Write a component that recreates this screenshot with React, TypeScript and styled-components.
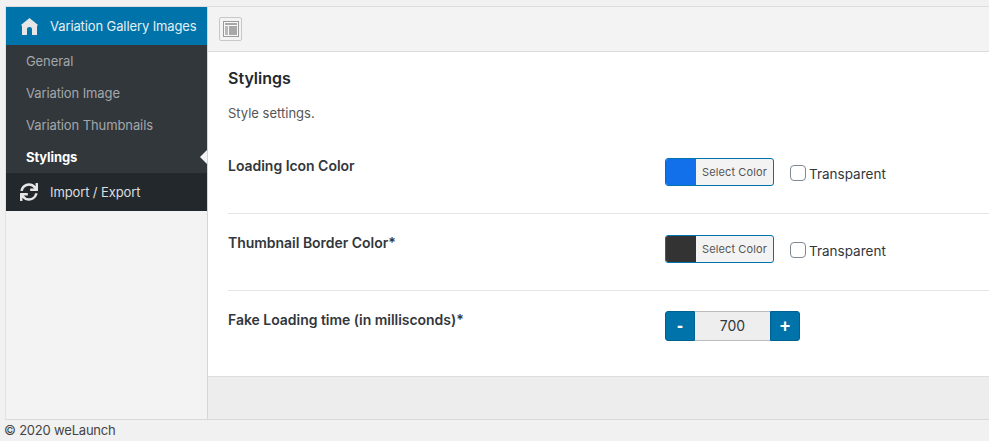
import React from 'react'
import styled, { createGlobalStyle } from 'styled-components'
import { FaSync } from 'react-icons/fa'

const GlobalStyle = createGlobalStyle`
  html, body {
    margin: 0;
    padding: 0;
    background: #f1f1f1;
  }
  body {
    font-family: Inter, "Liberation Sans", sans-serif;
    font-size: 13px;
    color: #444;
  }
`

const Page = styled.div`
  width: 989px;
  height: 441px;
  overflow: hidden;
  display: flex;
  flex-direction: column;
  padding-top: 6px;
  box-sizing: border-box;
`

const Frame = styled.div`
  height: 414px;
  box-sizing: border-box;
  margin-left: 5px;
  display: flex;
  border-top: 1px solid #dcdcdc;
  border-left: 1px solid #e2e2e2;
  border-bottom: 1px solid #d8d8d8;
`

const Sidebar = styled.nav`
  width: 201px;
  flex-shrink: 0;
  background: #f3f3f3;
  border-right: 1px solid #d5d5d5;
`

const MenuHead = styled.div<{ $active?: boolean }>`
  height: 38px;
  display: flex;
  align-items: center;
  gap: 12px;
  padding-left: 14px;
  background: ${p => (p.$active ? '#0073aa' : '#23282d')};
  color: ${p => (p.$active ? '#e4eff5' : '#dcdedf')};
  font-size: 13px;
  letter-spacing: -0.11px;
`

const IconSlot = styled.span`
  width: 18px;
  height: 18px;
  display: flex;
  align-items: center;
  justify-content: center;
  color: #e6e6e6;
`

const SubMenu = styled.ul`
  list-style: none;
  margin: 0;
  padding: 0;
  background: #32373c;
`

const SubItem = styled.li<{ $current?: boolean }>`
  position: relative;
  height: 32px;
  line-height: 32px;
  padding-left: 20px;
  font-size: 13px;
  letter-spacing: -0.1px;
  color: ${p => (p.$current ? '#fff' : '#a3a7ab')};
  font-weight: ${p => (p.$current ? 700 : 400)};

  ${p =>
    p.$current &&
    `
    &::after {
      content: '';
      position: absolute;
      right: 0;
      top: 9px;
      border: 7px solid transparent;
      border-left-width: 0;
      border-right-color: #f3f3f3;
      border-right-width: 7px;
    }
  `}
`

const Main = styled.main`
  flex: 1;
  display: flex;
  flex-direction: column;
  min-width: 0;
  background: #ededed;
`

const Toolbar = styled.div`
  height: 44px;
  display: flex;
  align-items: center;
  padding-left: 11px;
  background: #f3f3f3;
  border-bottom: 1px solid #dcdcdc;
`

const ToolButton = styled.button`
  width: 23px;
  height: 24px;
  padding: 0;
  display: flex;
  align-items: center;
  justify-content: center;
  background: #f3f3f3;
  border: 1px solid #c8c8c8;
  border-radius: 2px;
`

const Content = styled.section`
  height: 325px;
  box-sizing: border-box;
  background: #fff;
  padding: 16px 0 0 20px;
  border-bottom: 1px solid #dedede;
`

const Title = styled.h2`
  margin: 0;
  font-size: 16px;
  line-height: 20px;
  font-weight: 600;
  color: #23282d;
`

const Description = styled.p`
  margin: 16px 0 0;
  font-size: 13px;
  line-height: 18px;
  color: #555;
`

const Row = styled.div<{ $first?: boolean }>`
  display: grid;
  grid-template-columns: 437px 1fr;
  height: ${p => (p.$first ? '78px' : '77px')};
  box-sizing: border-box;
  padding-top: ${p => (p.$first ? '22px' : '20px')};
  border-top: ${p => (p.$first ? 'none' : '1px solid #e5e5e5')};
  margin-top: ${p => (p.$first ? '13px' : '0')};
`

const Label = styled.div`
  font-size: 14px;
  font-weight: 600;
  line-height: 18px;
  color: #32373c;
  letter-spacing: -0.03px;
`

const Controls = styled.div`
  display: flex;
  align-items: flex-start;
`

const ColorButton = styled.button`
  width: 109px;
  height: 28px;
  margin-top: 1px;
  padding: 0;
  display: flex;
  box-sizing: border-box;
  overflow: hidden;
  background: #f3f3f3;
  border: 1px solid #0073aa;
  border-radius: 3px;
  font-family: inherit;
`

const Swatch = styled.span<{ $color: string }>`
  width: 30px;
  height: 100%;
  background: ${p => p.$color};
`

const ColorText = styled.span`
  flex: 1;
  font-size: 11px;
  line-height: 26px;
  text-align: center;
  color: #555;
  letter-spacing: 0.12px;
`

const CheckLabel = styled.label`
  display: flex;
  align-items: flex-start;
  gap: 3px;
  margin: 8px 0 0 16px;
  font-size: 13.5px;
  line-height: 16px;
  color: #32373c;
`

const CheckBox = styled.span`
  width: 16px;
  height: 16px;
  box-sizing: border-box;
  background: #fff;
  border: 1px solid #7e8993;
  border-radius: 4px;
`

const CheckText = styled.span`
  margin-top: 1px;
`

const Spinner = styled.div`
  display: flex;
  height: 30px;
`

const SpinButton = styled.button<{ $side: 'left' | 'right' }>`
  width: 30px;
  height: 30px;
  padding: 0;
  background: #0073aa;
  border: 1px solid #006291;
  border-radius: ${p => (p.$side === 'left' ? '3px 0 0 3px' : '0 3px 3px 0')};
  color: #fff;
  font-family: "Liberation Sans", sans-serif;
  font-size: 18px;
  font-weight: 700;
  line-height: 26px;
`

const SpinValue = styled.div`
  width: 75px;
  box-sizing: border-box;
  background: #eee;
  border-top: 1px solid #bbb;
  border-bottom: 1px solid #bbb;
  text-align: center;
  font-size: 14px;
  line-height: 28px;
  color: #32373c;
`

const Footer = styled.footer`
  flex: 1;
  font-size: 13px;
  padding-left: 4px;
  line-height: 20px;
  color: #444;
  letter-spacing: -0.2px;
`

const HomeIcon = () => (
  <svg width="17" height="17" viewBox="0 0 17 17" fill="currentColor">
    <path d="M8.5 0 L17 7 L16 8 V17 H11 V11 Q11 9 8.5 9 Q6 9 6 11 V17 H1 V8 L0 7 Z" />
  </svg>
)

const LayoutIcon = () => (
  <svg width="16" height="16" viewBox="0 0 16 16">
    <rect x="0.5" y="0.5" width="15" height="15" fill="#f8f8f8" stroke="#9a9a9a" />
    <rect x="2" y="2" width="12" height="2" fill="#a8a8a8" />
    <rect x="2" y="5" width="3" height="9" fill="#b8b8b8" />
    <rect x="6" y="5" width="8" height="9" fill="#a8a8a8" />
  </svg>
)

const ColorRow: React.FC<{ label: string; color: string; first?: boolean }> = ({ label, color, first }) => (
  <Row $first={first}>
    <Label>{label}</Label>
    <Controls>
      <ColorButton type="button">
        <Swatch $color={color} />
        <ColorText>Select Color</ColorText>
      </ColorButton>
      <CheckLabel>
        <CheckBox />
        <CheckText>Transparent</CheckText>
      </CheckLabel>
    </Controls>
  </Row>
)

const App: React.FC = () => {
  return (
    <>
      <GlobalStyle />
      <Page>
        <Frame>
          <Sidebar>
            <MenuHead $active>
              <IconSlot>
                <HomeIcon />
              </IconSlot>
              Variation Gallery Images
            </MenuHead>
            <SubMenu>
              <SubItem>General</SubItem>
              <SubItem>Variation Image</SubItem>
              <SubItem>Variation Thumbnails</SubItem>
              <SubItem $current>Stylings</SubItem>
            </SubMenu>
            <MenuHead>
              <IconSlot>
                <FaSync size={18} />
              </IconSlot>
              Import / Export
            </MenuHead>
          </Sidebar>
          <Main>
            <Toolbar>
              <ToolButton type="button" aria-label="Layout">
                <LayoutIcon />
              </ToolButton>
            </Toolbar>
            <Content>
              <Title>Stylings</Title>
              <Description>Style settings.</Description>
              <ColorRow first label="Loading Icon Color" color="#1271ea" />
              <ColorRow label="Thumbnail Border Color*" color="#333333" />
              <Row>
                <Label>Fake Loading time (in millisconds)*</Label>
                <Controls>
                  <Spinner>
                    <SpinButton type="button" $side="left">-</SpinButton>
                    <SpinValue>700</SpinValue>
                    <SpinButton type="button" $side="right">+</SpinButton>
                  </Spinner>
                </Controls>
              </Row>
            </Content>
          </Main>
        </Frame>
        <Footer>© 2020 weLaunch</Footer>
      </Page>
    </>
  )
}

export default App
